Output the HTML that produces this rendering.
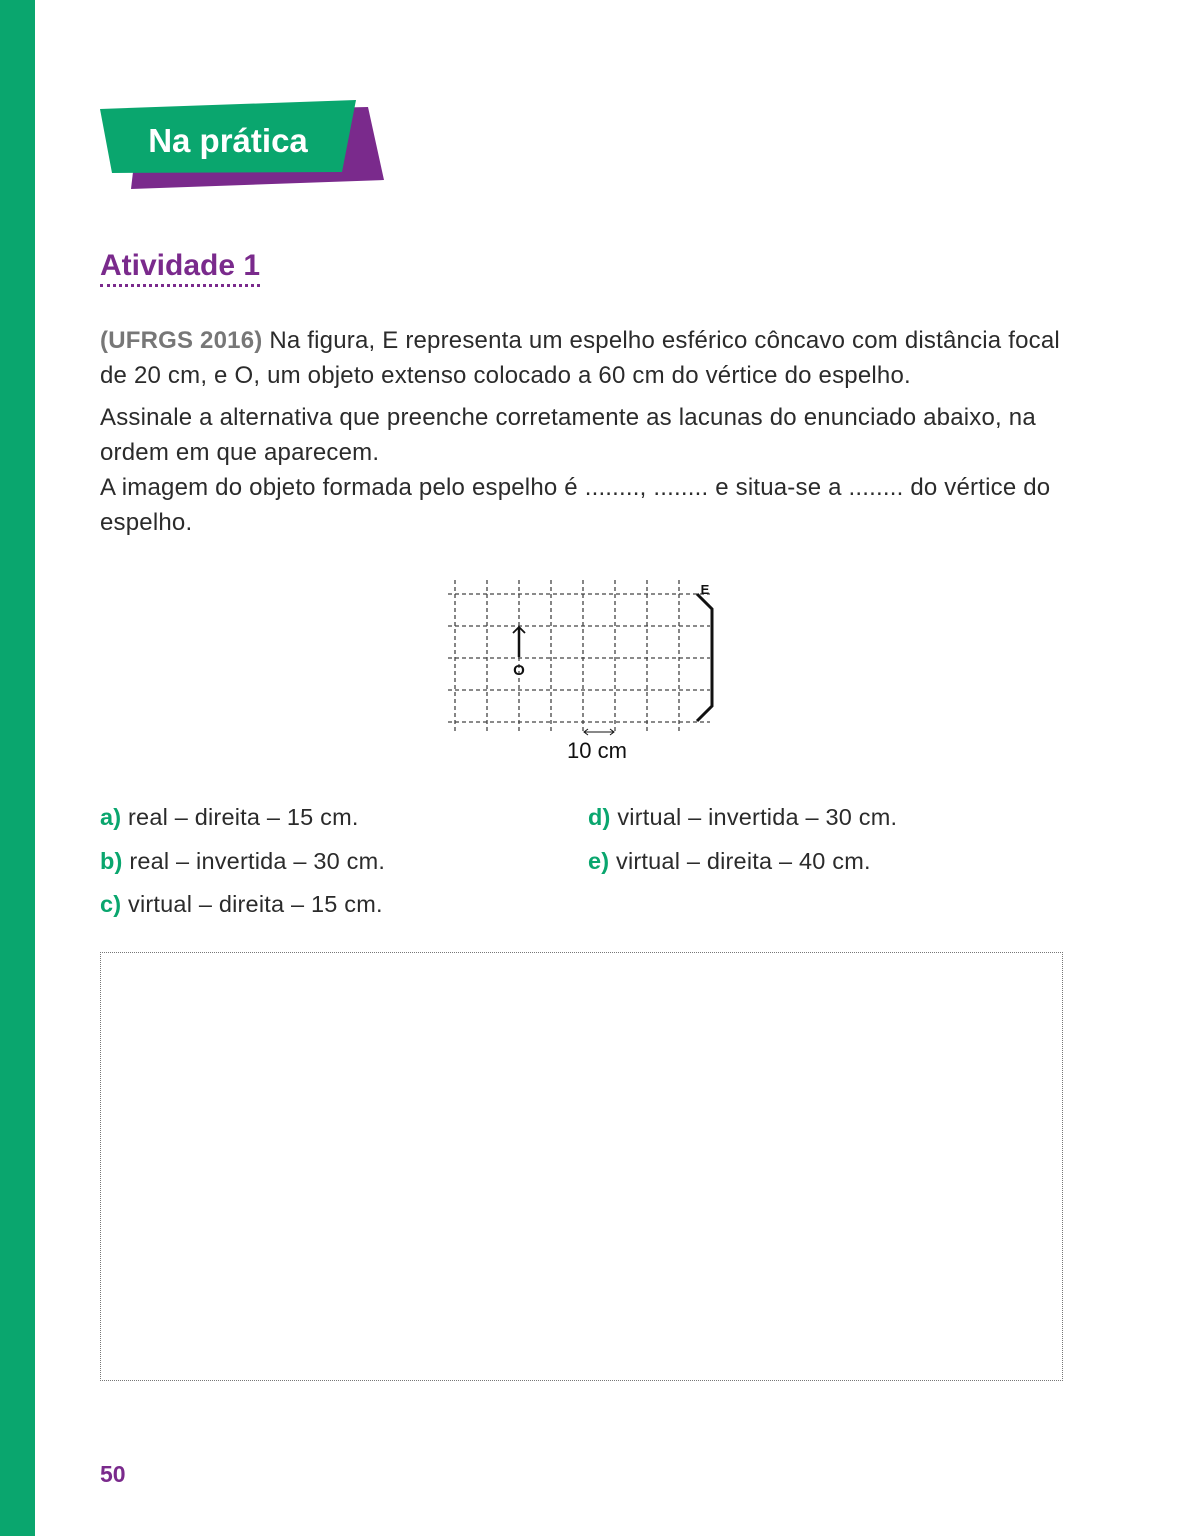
<!DOCTYPE html>
<html><head><meta charset="utf-8"><style>
body{margin:0;width:1182px;height:1536px;background:#fff;position:relative;font-family:"Liberation Sans",sans-serif;color:#2b2b2b;overflow:hidden}
.bar{position:absolute;left:0;top:0;width:35px;height:1536px;background:#0aa66e}
.t{position:absolute;left:100px;font-size:24px;line-height:35px;letter-spacing:0.2px;white-space:nowrap}
.g{color:#0aa66e;font-weight:bold}
.opt{position:absolute;font-size:23.5px;letter-spacing:0.2px}
</style></head><body>
<div class="bar"></div>
<svg style="position:absolute;left:0;top:0" width="400" height="200">
<polygon points="140,112 368,107 384,180 131,189" fill="#7a2a8c"/>
<polygon points="100,109 356,100 342,172 112,173" fill="#0aa66e"/>
<text x="228" y="152" text-anchor="middle" font-family="Liberation Sans" font-weight="bold" font-size="33" fill="#fff">Na prática</text>
</svg>
<div style="position:absolute;left:100px;top:249px;font-size:30px;font-weight:bold;color:#7a2a8c;letter-spacing:0px">Atividade 1</div>
<div style="position:absolute;left:100px;top:284px;width:160px;border-top:3px dotted #7a2a8c"></div>
<div class="t" style="top:323px"><span style="color:#777;font-weight:bold">(UFRGS 2016)</span> Na figura, E representa um espelho esférico côncavo com distância focal<br>de 20 cm, e O, um objeto extenso colocado a 60 cm do vértice do espelho.</div>
<div class="t" style="top:400px">Assinale a alternativa que preenche corretamente as lacunas do enunciado abaixo, na<br>ordem em que aparecem.<br>A imagem do objeto formada pelo espelho é ........, ........ e situa-se a ........ do vértice do<br>espelho.</div>
<svg style="position:absolute;left:0;top:0" width="1182" height="800">
<g stroke="#444" stroke-width="1.3" stroke-dasharray="4,3">
<line x1="455" y1="580" x2="455" y2="734"/><line x1="487" y1="580" x2="487" y2="734"/><line x1="519" y1="580" x2="519" y2="734"/><line x1="551" y1="580" x2="551" y2="734"/><line x1="583" y1="580" x2="583" y2="734"/><line x1="615" y1="580" x2="615" y2="734"/><line x1="647" y1="580" x2="647" y2="734"/><line x1="679" y1="580" x2="679" y2="734"/>
<line x1="448" y1="594" x2="710" y2="594"/><line x1="448" y1="626" x2="710" y2="626"/><line x1="448" y1="658" x2="710" y2="658"/><line x1="448" y1="690" x2="710" y2="690"/><line x1="448" y1="722" x2="710" y2="722"/>
</g>
<polyline points="697,594 712,609 712,706 697,721" fill="none" stroke="#111" stroke-width="3"/>
<line x1="519" y1="657" x2="519" y2="628" stroke="#111" stroke-width="2.5"/>
<polyline points="513,633 519,627 525,633" fill="none" stroke="#111" stroke-width="1.8"/>
<text x="519" y="675" text-anchor="middle" font-weight="bold" font-size="15" fill="#111">O</text>
<text x="705" y="594" text-anchor="middle" font-weight="bold" font-size="13" fill="#111">E</text>
<line x1="584" y1="732" x2="614" y2="732" stroke="#111" stroke-width="1"/>
<polyline points="588,729 584,732 588,735" fill="none" stroke="#111"/><polyline points="610,729 614,732 610,735" fill="none" stroke="#111"/>
<text x="597" y="758" text-anchor="middle" font-size="22" fill="#111">10 cm</text>
</svg>
<div class="opt" style="left:100px;top:804px"><span class="g">a)</span> real – direita – 15 cm.</div>
<div class="opt" style="left:100px;top:848px"><span class="g">b)</span> real – invertida – 30 cm.</div>
<div class="opt" style="left:100px;top:891px"><span class="g">c)</span> virtual – direita – 15 cm.</div>
<div class="opt" style="left:588px;top:804px"><span class="g">d)</span> virtual – invertida – 30 cm.</div>
<div class="opt" style="left:588px;top:848px"><span class="g">e)</span> virtual – direita – 40 cm.</div>
<div style="position:absolute;left:100px;top:952px;width:961px;height:427px;border:1px dotted #777"></div>
<div style="position:absolute;left:100px;top:1461px;font-size:23px;font-weight:bold;color:#7a2a8c">50</div>
</body></html>
